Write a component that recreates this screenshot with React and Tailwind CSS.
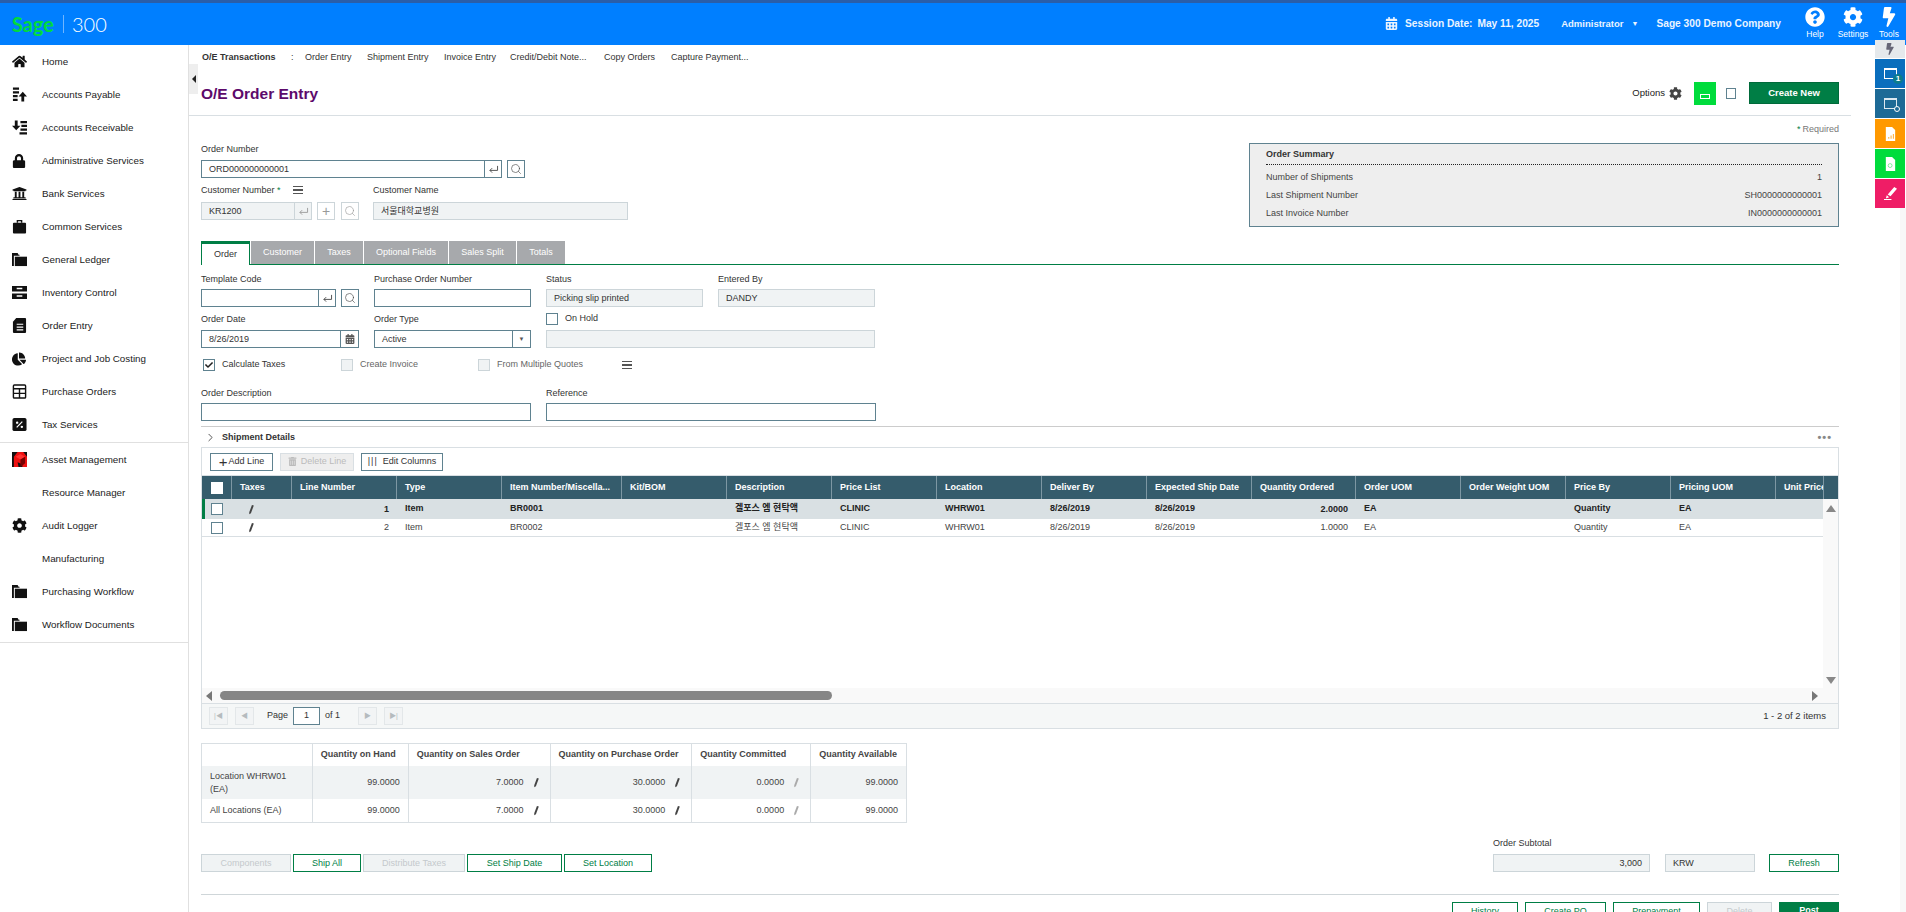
import React from 'react';
import {
  FaHome, FaLock, FaUniversity, FaChartPie, FaCog,
  FaBolt, FaCalendarAlt, FaQuestionCircle, FaCheck, FaTrashAlt,
} from 'react-icons/fa';
import { Search, ChevronRight } from 'lucide-react';

const ApIcon = () => (
  <svg viewBox="0 0 16 16" className="w-[15px] h-[15px]" fill="#111">
    <path d="M1 0.5h6.5v2.5H1zM1 4.5h6.5v2.5H1zM1 8.5h5v2.5H1zM1 12.5h5v2.5H1z" />
    <path d="M11.5 5l4.5 5h-3v5.5h-3V10H7z" />
  </svg>
);
const ArIcon = () => (
  <svg viewBox="0 0 16 16" className="w-[15px] h-[15px]" fill="#111">
    <path d="M3 0.5h3V6h3l-4.500 5L0 6h3z" />
    <path d="M9 1h7v2.500H9zM10 5h6v2.500h-6zM9 9h7v2.500H9zM8 13h8v2.500H8z" />
  </svg>
);
const InventoryIcon = () => (
  <svg viewBox="0 0 16 16" className="w-[15px] h-[15px]" fill="#111">
    <path d="M0 1h16v6H0zM0 9h16v6H0z" />
    <path d="M5 3h6v1.500H5zM5 11h6v1.500H5z" fill="#fff" />
  </svg>
);
const OrderIcon = () => (
  <svg viewBox="0 0 16 16" className="w-[15px] h-[15px]" fill="#111">
    <path d="M4.500 0H14a1 1 0 0 1 1 1v14a1 1 0 0 1-1 1H2a1 1 0 0 1-1-1V4z" />
    <path d="M5 6h7v1.300H5zM5 9h7v1.300H5zM5 12h7v1.300H5z" fill="#fff" />
  </svg>
);
const TableIcon = () => (
  <svg viewBox="0 0 16 16" className="w-[15px] h-[15px]" fill="none" stroke="#111" strokeWidth="1.500">
    <rect x="1.500" y="1" width="13" height="14" rx="1" />
    <path d="M1.500 5h13M1.500 10h13M8 5v10" />
  </svg>
);
const TaxIcon = () => (
  <svg viewBox="0 0 16 16" className="w-[15px] h-[15px]">
    <rect x="0.500" y="1" width="15" height="14" rx="2" fill="#111" />
    <path d="M5 11l6-6" stroke="#fff" strokeWidth="1.300" />
    <circle cx="5.500" cy="6" r="1.300" fill="#fff" />
    <circle cx="10.500" cy="10.500" r="1.300" fill="#fff" />
  </svg>
);
const CubeIcon = () => (
  <svg viewBox="0 0 16 16" className="w-[15px] h-[15px]">
    <rect width="16" height="16" fill="#e11" />
    <path d="M0 0h6L2 5v11H0zM12 0h4v5zM7 16l-1-5 5 2v3z" fill="#111" />
    <path d="M4 5l5-3 5 3-5 3z" fill="#f33" />
    <path d="M9 8l5-3v7l-5 4z" fill="#700" />
  </svg>
);
const FolderIcon = () => (
  <svg viewBox="0 0 16 16" className="w-[15px] h-[15px]" fill="#111">
    <path d="M0 1h6l1 2h1v1H2v11H0z" />
    <path d="M3 5h13v10H3z" />
  </svg>
);
const CaseIcon = () => (
  <svg viewBox="0 0 16 16" className="w-[15px] h-[15px]" fill="#111">
    <path d="M5 4V1h6v3h-1.500V2.500h-3V4z" />
    <rect x="1" y="4" width="14" height="11.500" rx="1" />
  </svg>
);

const navTop = [
  ['Home', <FaHome size={15} />],
  ['Accounts Payable', <ApIcon />],
  ['Accounts Receivable', <ArIcon />],
  ['Administrative Services', <FaLock size={14} />],
  ['Bank Services', <FaUniversity size={15} />],
  ['Common Services', <CaseIcon />],
  ['General Ledger', <FolderIcon />],
  ['Inventory Control', <InventoryIcon />],
  ['Order Entry', <OrderIcon />],
  ['Project and Job Costing', <FaChartPie size={14} />],
  ['Purchase Orders', <TableIcon />],
  ['Tax Services', <TaxIcon />],
];
const navBottom = [
  ['Asset Management', <CubeIcon />],
  ['Resource Manager', null],
  ['Audit Logger', <FaCog size={15} />],
  ['Manufacturing', null],
  ['Purchasing Workflow', <FolderIcon />],
  ['Workflow Documents', <FolderIcon />],
];

const NavItem = ({ label, icon }) => (
  <div className="h-[33px] flex items-center text-[#222] text-[9.800px]">
    <span className="w-[42px] pl-[12px] flex items-center text-[#111]">{icon}</span>
    <span className="mt-[2px]">{label}</span>
  </div>
);

const EnterIcon = ({ color = '#444' }) => (
  <svg viewBox="0 0 12 10" className="w-[11px] h-[9px]" fill="none" stroke={color} strokeWidth="1">
    <path d="M10.500 1v5H2M4.500 3.500L2 6l2.500 2.500" />
  </svg>
);
const Hamburger = () => (
  <div className="w-[10px] flex flex-col gap-[2px]">
    <span className="h-[1.500px] bg-[#555]" />
    <span className="h-[1.500px] bg-[#555]" />
    <span className="h-[1.500px] bg-[#555]" />
  </div>
);
const Pencil = ({ muted }) => (
  <svg viewBox="0 0 6 12" className="w-[5px] h-[11px]">
    <path d="M3.500 0.500L5.800 1.300 2.300 10.500 0.300 11.700 0.300 9.300z" fill={muted ? '#aaa' : '#444'} />
  </svg>
);

const inputBase = 'h-[18px] border border-[#5f8290] bg-white flex items-center px-[7px] pt-[2px]';
const readBase = 'h-[18px] border border-[#ccd5d9] bg-[#f0f3f4] flex items-center px-[7px] pt-[2px]';
const IconBox = ({ children, off, className = 'w-[18px]' }) => (
  <div className={`${className} h-[18px] border ${off ? 'border-[#ccd5d9]' : 'border-[#5f8290]'} flex items-center justify-center shrink-0`}>
    {children}
  </div>
);

const LookupInput = ({ value, width }) => (
  <div className="flex gap-[5px]">
    <div className={`${width} h-[18px] border border-[#5f8290] flex`}>
      <div className="flex-1 flex items-center px-[7px] pt-[2px]">{value}</div>
      <div className="w-[17px] border-l border-[#5f8290] flex items-center justify-center"><EnterIcon /></div>
    </div>
    <IconBox><Search size={12} strokeWidth={1.250} color="#444" /></IconBox>
  </div>
);

const Check = ({ off, checked }) => (
  <div className={`w-[12px] h-[12px] border ${off ? 'border-[#ccd5d9] bg-[#f0f3f4]' : 'border-[#5f8290] bg-white'} flex items-center justify-center shrink-0`}>
    {checked && <FaCheck size={8} color="#222" />}
  </div>
);

const Btn = ({ children, width, off }) => (
  <div className={`${width} h-[18px] border pt-[1px] flex items-center justify-center shrink-0 ${off ? 'border-[#ccd5d9] bg-[#f0f3f4] text-[#c4c9cc]' : 'border-[#007e45] text-[#007e45]'}`}>
    {children}
  </div>
);

const columns = [
  ['Taxes', 'w-[60px]'],
  ['Line Number', 'w-[105px]'],
  ['Type', 'w-[105px]'],
  ['Item Number/Miscella...', 'w-[120px]'],
  ['Kit/BOM', 'w-[105px]'],
  ['Description', 'w-[105px]'],
  ['Price List', 'w-[105px]'],
  ['Location', 'w-[105px]'],
  ['Deliver By', 'w-[105px]'],
  ['Expected Ship Date', 'w-[105px]'],
  ['Quantity Ordered', 'w-[104px]'],
  ['Order UOM', 'w-[105px]'],
  ['Order Weight UOM', 'w-[105px]'],
  ['Price By', 'w-[105px]'],
  ['Pricing UOM', 'w-[105px]'],
  ['Unit Price', 'w-[48px]'],
];
const rowCells = [
  { line: '1', item: 'BR0001', qty: '2.0000' },
  { line: '2', item: 'BR0002', qty: '1.0000' },
];

const GridRow = ({ row, active }) => {
  const cells = [
    <span className="pl-[9px] flex"><Pencil /></span>,
    <span className="w-full text-right pt-[1px]">{row.line}</span>,
    'Item', row.item, '', '겔포스 엠 현탁액', 'CLINIC', 'WHRW01', '8/26/2019', '8/26/2019',
    <span className="w-full text-right pt-[1px]">{row.qty}</span>,
    'EA', '', 'Quantity', 'EA', '',
  ];
  return (
    <div className={`flex ${active ? 'h-[20px] bg-[#d9e0e3] font-bold text-[#222]' : 'h-[18px] border-b border-[#d9dfe3] text-[#444]'}`}>
      <div className={`w-[30px] flex items-center shrink-0 border-l-[3px] pl-[6px] ${active ? 'border-[#007e45]' : 'border-transparent'}`}>
        <Check />
      </div>
      {cells.map((c, i) => (
        <div key={i} className={`${columns[i][1]} shrink-0 px-[8px] flex items-center overflow-hidden whitespace-nowrap`}>{c}</div>
      ))}
    </div>
  );
};

const PagerBtn = ({ children }) => (
  <div className="w-[19px] h-[18px] border border-[#e3e7e9] bg-[#f2f4f5] flex items-center justify-center text-[#b5bbbe] text-[7px]">{children}</div>
);

const qtyHead = ['', 'Quantity on Hand', 'Quantity on Sales Order', 'Quantity on Purchase Order', 'Quantity Committed', 'Quantity Available'];
const qtyWidths = ['w-[111px]', 'w-[96px]', 'w-[142px]', 'w-[142px]', 'w-[119px]', 'w-[95px]'];

const QtyRow = ({ label, tall, shade }) => {
  const vals = [
    ['99.0000'],
    ['7.0000', 'dark'],
    ['30.0000', 'dark'],
    ['0.0000', 'muted'],
    ['99.0000'],
  ];
  return (
    <div className={`flex ${tall ? 'h-[33px]' : 'h-[23px]'} ${shade ? 'bg-[#f0f3f4]' : ''}`}>
      <div className={`${qtyWidths[0]} border-r border-[#d9dfe3] px-[8px] flex items-center leading-[13px] text-[#444]`}>{label}</div>
      {vals.map(([v, pen], i) => (
        <div key={i} className={`${qtyWidths[i + 1]} ${i < 4 ? 'border-r border-[#d9dfe3]' : ''} px-[8px] flex items-center justify-end gap-[10px] text-[#444]`}>
          {v}
          {pen && <span className="mr-[3px] flex"><Pencil muted={pen === 'muted'} /></span>}
        </div>
      ))}
    </div>
  );
};

const RailDoc = ({ accent }) => (
  <svg viewBox="0 0 14 18" className="w-[11px] h-[14px]">
    <path d="M1 0h8l4 4v14H1z" fill="#fff" />
    {accent}
  </svg>
);

const App = () => (
  <div className="relative h-[912px] w-full overflow-hidden bg-white text-[9px] text-[#333] font-['Liberation_Sans','Noto_Sans_CJK_KR',sans-serif]">
    {/* top bar */}
    <header className="h-[45px] border-t-[3px] border-[#2a5ea8] bg-[#007fff] flex items-center text-white">
      <div className="pl-[12px] flex items-center">
        <span className="text-[#00dc3c] text-[20px] font-['Lato',sans-serif] font-bold w-[42px] leading-none">Sage</span>
        <span className="w-px h-[18px] bg-[#6fb5ff] ml-[9px]" />
        <span className="text-[20px] font-['Lato',sans-serif] font-light ml-[8px] leading-none">300</span>
      </div>
      <div className="ml-auto flex items-center font-bold text-[10.200px] text-[#eaf4ff]">
        <FaCalendarAlt size={13} className="mr-[7px]" />
        <span className="mr-[5px]">Session Date:</span>
        <span>May 11, 2025</span>
        <span className="ml-[22px] text-[9.500px]">Administrator</span>
        <span className="ml-[8px] text-[7px]">▼</span>
        <span className="ml-[18px]">Sage 300 Demo Company</span>
      </div>
      <div className="flex ml-[15px] text-[8.500px]">
        <div className="w-[38px] flex flex-col items-center">
          <FaQuestionCircle size={20} />
          <span className="mt-[1px]">Help</span>
        </div>
        <div className="w-[38px] flex flex-col items-center">
          <FaCog size={20} />
          <span className="mt-[1px]">Settings</span>
        </div>
        <div className="w-[34px] flex flex-col items-center">
          <FaBolt size={20} />
          <span className="mt-[1px]">Tools</span>
        </div>
      </div>
    </header>

    {/* tools rail */}
    <div className="absolute top-[40px] right-[1px] w-[30px] flex flex-col gap-[1px] z-10">
      <div className="h-[18px] bg-[#e5e9ec] flex items-center justify-center"><FaBolt size={12} color="#667" /></div>
      <div className="h-[29px] bg-[#0a6ebd] flex items-center justify-center relative">
        <div className="w-[13px] h-[11px] border border-white border-t-[2px]" />
        <span className="absolute right-[2px] bottom-[4px] w-[10px] h-[10px] rounded-full bg-[#0c7c8c] text-white text-[8px] font-bold flex items-center justify-center">1</span>
      </div>
      <div className="h-[29px] bg-[#1d6a96] flex items-center justify-center relative">
        <div className="w-[13px] h-[11px] border border-[#dce8ef] border-t-[2px]" />
        <span className="absolute right-[5px] bottom-[6px] w-[6px] h-[6px] rounded-full border border-white bg-[#1d6a96]" />
      </div>
      <div className="h-[29px] bg-[#ff9900] flex items-center justify-center">
        <RailDoc accent={<path d="M4 15h1.500v-2H4zM7 15h1.500v-4H7zM10 15h1.500V9H10z" fill="#ffb84d" />} />
      </div>
      <div className="h-[29px] bg-[#00dc3c] flex items-center justify-center">
        <RailDoc accent={<circle cx="6.500" cy="11" r="2.500" fill="none" stroke="#5fe884" strokeWidth="1" />} />
      </div>
      <div className="h-[29px] bg-[#ef1d66] flex items-center justify-center">
        <svg viewBox="0 0 14 14" className="w-[13px] h-[13px]" fill="#fff">
          <path d="M11 0l3 2-7 8-3-2zM3 9l2.500 2L2 12.500zM0 13h8v1H0z" />
        </svg>
      </div>
    </div>
    <div className="absolute top-[208px] bottom-0 right-0 w-[6px] bg-[#f8f8f8]" />

    <div className="flex h-[867px]">
      {/* sidebar */}
      <aside className="w-[189px] shrink-0 border-r border-[#e0e0e0] pt-0">
        <div className="pt-0 pb-[1px] border-b border-[#e0e0e0] h-[398px]">
          {navTop.map(([label, icon]) => <NavItem key={label} label={label} icon={icon} />)}
        </div>
        <div className="border-b border-[#e0e0e0] h-[200px]">
          {navBottom.map(([label, icon]) => <NavItem key={label} label={label} icon={icon} />)}
        </div>
      </aside>

      {/* content */}
      <main className="relative flex-1 min-w-0">
        <div className="absolute left-0 top-[19px] w-[9px] h-[30px] bg-[#eeeeee] flex items-center justify-center">
          <span className="w-0 h-0 border-y-[4px] border-y-transparent border-r-[4px] border-r-[#222]" />
        </div>

        <div className="h-[26px] pl-[13px] flex items-center text-[#333] whitespace-nowrap">
          <span className="font-bold w-[89px]">O/E Transactions</span>
          <span className="w-[14px]">:</span>
          <span className="w-[62px]">Order Entry</span>
          <span className="w-[77px]">Shipment Entry</span>
          <span className="w-[66px]">Invoice Entry</span>
          <span className="w-[94px]">Credit/Debit Note...</span>
          <span className="w-[67px]">Copy Orders</span>
          <span>Capture Payment...</span>
        </div>

        <div className="h-[45px] mr-[55px] pl-[12px] pr-[12px] border-b border-[#d9dfe3] flex items-center">
          <h1 className="text-[15.500px] font-bold text-[#5c0a6b] pt-[2px]">O/E Order Entry</h1>
          <div className="ml-auto flex items-center">
            <span className="text-[#222] text-[9.500px]">Options</span>
            <FaCog size={13} className="ml-[4px] mr-[12px] text-[#444]" />
            <div className="w-[22px] h-[23px] bg-[#00dc3c] flex items-end justify-center pb-[6px]">
              <span className="w-[10px] h-[5px] border border-white" />
            </div>
            <span className="w-[10px] h-[11px] border border-[#5f8290] ml-[10px] mr-[13px]" />
            <div className="w-[90px] h-[22px] bg-[#007e45] border border-[#006a3a] text-white font-bold text-[9.500px] flex items-center justify-center">Create New</div>
          </div>
        </div>

        <div className="ml-[12px] w-[1638px]">
          <div className="h-[27px] flex items-center justify-end text-[#777]">
            <span className="text-[#007e45] mr-[2px]">*</span> Required
          </div>

          <div className="flex justify-between items-start h-[84px] mb-[14px]">
            <div>
              <div className="h-[17px] leading-[12px]">Order Number</div>
              <LookupInput value="ORD000000000001" width="w-[301px]" />
              <div className="h-[24px] flex items-center">
                <span className="w-[92px] mt-[2px]">Customer Number <span className="text-[#007e45]">*</span></span>
                <Hamburger />
                <span className="ml-[70px] mt-[2px]">Customer Name</span>
              </div>
              <div className="flex">
                <div className={`${readBase} w-[111px]`}>KR1200<span className="ml-auto -mr-[7px] -mt-[2px] w-[17px] h-[18px] border-l border-[#ccd5d9] flex items-center justify-center"><EnterIcon color="#999" /></span></div>
                <IconBox off className="w-[18px] ml-[5px]"><span className="text-[#999] text-[14px] font-light leading-none">+</span></IconBox>
                <IconBox off className="w-[18px] ml-[6px]"><Search size={12} strokeWidth={1.250} color="#999" /></IconBox>
                <div className={`${readBase} w-[255px] ml-[14px]`}>서울대학교병원</div>
              </div>
            </div>
            <div className="w-[590px] h-[84px] bg-[#eeeeee] border border-[#5f8290] px-[16px] text-[#444]">
              <div className="h-[21px] pt-[2px] flex items-center font-bold text-[#333] border-b border-dotted border-[#222]">Order Summary</div>
              <div className="h-[18px] mt-[4px] flex items-center justify-between"><span>Number of Shipments</span><span>1</span></div>
              <div className="h-[18px] flex items-center justify-between"><span>Last Shipment Number</span><span>SH0000000000001</span></div>
              <div className="h-[18px] flex items-center justify-between"><span>Last Invoice Number</span><span>IN0000000000001</span></div>
            </div>
          </div>

          {/* tabs */}
          <div className="h-[24px] flex border-b border-[#007e45]">
            <div className="w-[49px] h-[24px] border-t-[3px] border-x border-[#007e45] bg-white flex items-center justify-center text-[#333] z-10">Order</div>
            {[['Customer', 'w-[63px]'], ['Taxes', 'w-[48px]'], ['Optional Fields', 'w-[84px]'], ['Sales Split', 'w-[67px]'], ['Totals', 'w-[48px]']].map(([t, w]) => (
              <div key={t} className={`${w} h-[23px] ml-[1px] bg-[#a7a9ac] text-white flex items-center justify-center`}>{t}</div>
            ))}
          </div>

          {/* order form */}
          <div className="grid grid-cols-[173px_172px_172px_157px] w-[674px]">
            <div className="h-[24px] pt-[6px] flex items-center">Template Code</div>
            <div className="h-[24px] pt-[6px] flex items-center">Purchase Order Number</div>
            <div className="h-[24px] pt-[6px] flex items-center">Status</div>
            <div className="h-[24px] pt-[6px] flex items-center">Entered By</div>

            <LookupInput value="" width="w-[135px]" />
            <div className={`${inputBase} w-[157px]`} />
            <div className={`${readBase} w-[157px]`}>Picking slip printed</div>
            <div className={`${readBase} w-[157px]`}>DANDY</div>

            <div className="h-[23px] pt-[2px] flex items-center">Order Date</div>
            <div className="h-[23px] pt-[2px] flex items-center">Order Type</div>
            <div className="col-span-2 h-[23px] flex items-center"><Check /><span className="ml-[7px]">On Hold</span></div>

            <div className="w-[158px] h-[18px] border border-[#5f8290] flex">
              <div className="flex-1 flex items-center px-[7px] pt-[2px]">8/26/2019</div>
              <div className="w-[18px] border-l border-[#5f8290] flex items-center justify-center"><FaCalendarAlt size={10} color="#555" /></div>
            </div>
            <div className="w-[157px] h-[18px] border border-[#5f8290] flex">
              <div className="flex-1 flex items-center px-[7px] pt-[2px]">Active</div>
              <div className="w-[18px] border-l border-[#5f8290] flex items-center justify-center text-[6px] text-[#555]">▼</div>
            </div>
            <div className={`${readBase} col-span-2 w-[329px]`} />
          </div>

          <div className="h-[34px] flex items-center pl-[2px]">
            <Check checked />
            <span className="ml-[7px] w-[119px]">Calculate Taxes</span>
            <Check off />
            <span className="ml-[7px] w-[118px] text-[#666]">Create Invoice</span>
            <Check off />
            <span className="ml-[7px] w-[125px] text-[#666]">From Multiple Quotes</span>
            <Hamburger />
          </div>

          <div className="flex h-[21px] pt-[2px] items-center">
            <span className="w-[345px]">Order Description</span>
            <span>Reference</span>
          </div>
          <div className="flex gap-[15px]">
            <div className={`${inputBase} w-[330px]`} />
            <div className={`${inputBase} w-[330px]`} />
          </div>

          <div className="mt-[5px] border-t border-[#cccccc] h-[21px] flex items-center pl-[3px]">
            <ChevronRight size={13} strokeWidth={1.500} color="#333" />
            <span className="ml-[5px] mt-[2px] font-bold text-[#333]">Shipment Details</span>
            <span className="ml-auto mr-[7px] text-[#888] font-bold tracking-[1px] leading-none text-[11px]">•••</span>
          </div>

          {/* shipment grid */}
          <div className="h-[282px] border border-[#d9dfe3] flex flex-col">
            <div className="h-[28px] shrink-0 flex items-center pl-[8px] gap-[7px] border-b border-[#d9dfe3]">
              <div className="w-[63px] h-[18px] border border-[#5f8290] flex items-center justify-center gap-[1px] text-[#333]"><span className="text-[15px] font-light leading-none">+</span>Add Line</div>
              <div className="w-[74px] h-[18px] border border-[#d9dfe3] bg-[#eeeeee] flex items-center justify-center gap-[4px] text-[#bbb]"><FaTrashAlt size={9} />Delete Line</div>
              <div className="w-[82px] h-[18px] border border-[#5f8290] flex items-center justify-center gap-[5px] text-[#333]"><span className="tracking-[1px] font-light">|||</span>Edit Columns</div>
            </div>
            <div className="h-[23px] shrink-0 bg-[#355c6c] text-white font-bold flex items-center">
              <div className="w-[30px] h-full shrink-0 border-r border-[#7d97a3] flex items-center pl-[9px]">
                <div className="w-[12px] h-[12px] bg-white" />
              </div>
              {columns.map(([h, w]) => (
                <div key={h} className={`${w} h-full shrink-0 border-r border-[#7d97a3] px-[8px] pt-[1px] flex items-center whitespace-nowrap overflow-hidden`}>{h}</div>
              ))}
            </div>
            <div className="flex-1 min-h-0 flex">
              <div className="w-[1622px] min-w-0 overflow-hidden">
                {rowCells.map((r, i) => <GridRow key={r.line} row={r} active={i === 0} />)}
              </div>
              <div className="w-[15px] bg-[#f9f9f9] flex flex-col items-center justify-between pt-[6px] pb-[4px]">
                <span className="w-0 h-0 border-x-[5px] border-x-transparent border-b-[7px] border-b-[#888]" />
                <span className="w-0 h-0 border-x-[5px] border-x-transparent border-t-[7px] border-t-[#888]" />
              </div>
            </div>
            <div className="h-[15px] shrink-0 bg-[#f9f9f9] flex items-center pl-[4px]">
              <span className="w-0 h-0 border-y-[5px] border-y-transparent border-r-[6px] border-r-[#777]" />
              <div className="ml-[8px] w-[612px] h-[9px] rounded-full bg-[#868686]" />
              <span className="ml-auto mr-[20px] w-0 h-0 border-y-[5px] border-y-transparent border-l-[6px] border-l-[#777]" />
            </div>
            <div className="h-[25px] shrink-0 bg-[#f5f7f7] border-t border-[#d9dfe3] flex items-center pl-[7px] pr-[12px]">
              <PagerBtn>|◀</PagerBtn>
              <span className="ml-[7px]"><PagerBtn>◀</PagerBtn></span>
              <span className="ml-[13px]">Page</span>
              <div className="ml-[5px] w-[27px] h-[18px] border border-[#5f8290] bg-white flex items-center justify-center">1</div>
              <span className="ml-[5px]">of 1</span>
              <span className="ml-[18px]"><PagerBtn>▶</PagerBtn></span>
              <span className="ml-[7px]"><PagerBtn>▶|</PagerBtn></span>
              <span className="ml-auto text-[9.500px]">1 - 2 of 2 items</span>
            </div>
          </div>

          {/* quantities */}
          <div className="mt-[14px] w-[706px] border border-[#d9dfe3]">
            <div className="flex h-[22px]">
              {qtyHead.map((h, i) => (
                <div key={i} className={`${qtyWidths[i]} ${i < 5 ? 'border-r border-[#d9dfe3]' : ''} px-[8px] flex items-center font-bold text-[#444] whitespace-nowrap`}>{h}</div>
              ))}
            </div>
            <QtyRow label="Location WHRW01 (EA)" tall shade />
            <QtyRow label="All Locations (EA)" />
          </div>

          {/* actions */}
          <div className="mt-[15px] flex items-end">
            <div className="flex gap-[2px]">
              <Btn width="w-[90px]" off>Components</Btn>
              <Btn width="w-[68px]">Ship All</Btn>
              <Btn width="w-[102px]" off>Distribute Taxes</Btn>
              <Btn width="w-[95px]">Set Ship Date</Btn>
              <Btn width="w-[88px]">Set Location</Btn>
            </div>
            <div className="ml-auto">
              <div className="h-[16px] leading-[10px]">Order Subtotal</div>
              <div className="flex">
                <div className={`${readBase} w-[157px] justify-end`}>3,000</div>
                <div className={`${readBase} w-[90px] ml-[15px]`}>KRW</div>
                <div className="ml-[14px]"><Btn width="w-[70px]">Refresh</Btn></div>
              </div>
            </div>
          </div>

          <div className="mt-[22px] border-t border-[#cfd6d9] pt-[7px] flex justify-end gap-[7px]">
            <Btn width="w-[66px]">History</Btn>
            <Btn width="w-[81px]">Create PO</Btn>
            <Btn width="w-[87px]">Prepayment</Btn>
            <Btn width="w-[65px]" off>Delete</Btn>
            <div className="w-[60px] h-[18px] bg-[#007e45] text-white font-bold flex items-center justify-center">Post</div>
          </div>
        </div>
      </main>
    </div>
  </div>
);

export default App;
